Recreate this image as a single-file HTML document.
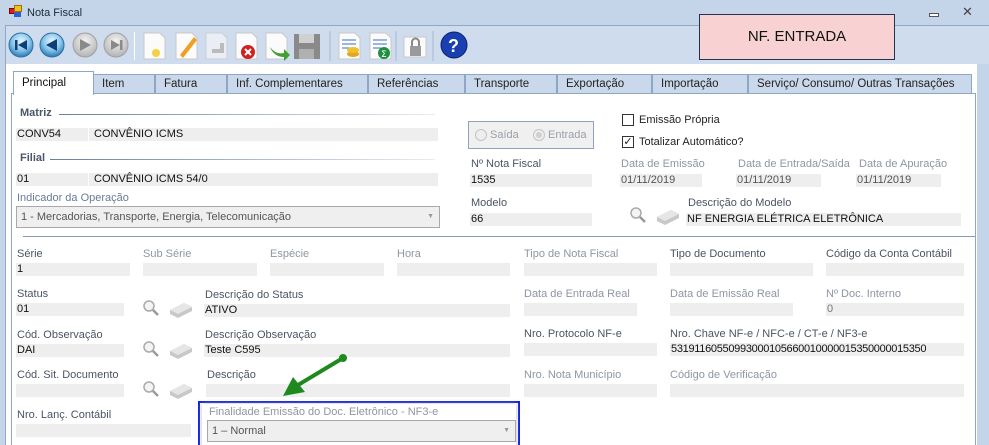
<!DOCTYPE html>
<html style="width:989px;height:445px;overflow:hidden"><head><meta charset="utf-8"><style>
*{margin:0;padding:0;box-sizing:border-box}
body{width:989px;height:445px;overflow:hidden;background:#c4d5ea;font-family:"Liberation Sans",Arial,sans-serif;font-size:11px;color:#1a1a1a;position:relative}
.a{position:absolute;white-space:nowrap}
.f{position:absolute;background:#eeeeee;height:13px;line-height:13px;font-size:11px;padding-left:1px;color:#111}
.l{position:absolute;white-space:nowrap;font-size:11px;color:#4b5463}
.g{color:#8e96a3}
.tab{position:absolute;top:74px;height:20px;border:1px solid #8fa6c4;border-bottom:none;background:#c9d8eb;font-family:"Liberation Sans",Arial,sans-serif;font-size:11.5px;line-height:19px;padding-left:8px;color:#222}
</style></head><body>
<div class="a" style="left:9px;top:8px;width:7px;height:6px;background:#d02020;border:1px solid #800"></div>
<div class="a" style="left:14px;top:5px;width:8px;height:7px;background:#f0c020;border:1px solid #a07000"></div>
<div class="a" style="left:14px;top:12px;width:7px;height:5px;background:#3060d0"></div>
<div class="a" style="left:27px;top:7px;font-size:11px;color:#1e2a3a">Nota Fiscal</div>
<div class="a" style="left:929px;top:13px;width:10px;height:4px;border:1px solid #555;background:#fff"></div>
<div class="a" style="left:962px;top:4px;font-size:13px;color:#444">✕</div>
<div class="a" style="left:5px;top:25px;width:998px;height:41px;background:#cfdcee;border:1px solid #90a7c6;border-bottom:none"></div>
<div class="a" style="left:5px;top:64px;width:998px;height:400px;background:#fff;border-left:1px solid #90a7c6"></div>
<svg class="a" style="left:8px;top:32px" width="124" height="27">
<defs><radialGradient id="b" cx="50%" cy="35%" r="60%"><stop offset="0" stop-color="#e8f6ff"/><stop offset="0.6" stop-color="#8cc8ea"/><stop offset="1" stop-color="#3a86c0"/></radialGradient>
<radialGradient id="gr" cx="50%" cy="35%" r="60%"><stop offset="0" stop-color="#f4f4f4"/><stop offset="1" stop-color="#b8b8b8"/></radialGradient></defs>
<circle cx="13" cy="13" r="12" fill="url(#b)" stroke="#2c6fa6"/><rect x="7" y="8" width="2.5" height="10" fill="#0e3f78"/><path d="M19 8 L10 13 L19 18Z" fill="#0e3f78"/>
<circle cx="44" cy="13" r="12" fill="url(#b)" stroke="#2c6fa6"/><path d="M49 7 L38 13 L49 19Z" fill="#0e3f78"/>
<circle cx="77" cy="13" r="12" fill="url(#gr)" stroke="#a0a0a0"/><path d="M72 7 L83 13 L72 19Z" fill="#8a8a8a"/>
<circle cx="108" cy="13" r="12" fill="url(#gr)" stroke="#a0a0a0"/><path d="M103 8 L112 13 L103 18Z" fill="#8a8a8a"/><rect x="112" y="8" width="2.5" height="10" fill="#8a8a8a"/>
</svg>
<div class="a" style="left:134px;top:32px;width:1px;height:28px;background:#9fb2cc;border-right:1px solid #fff"></div>
<svg class="a" style="left:142px;top:31px" width="330" height="30">
<g fill="#fbfbfb" stroke="#c8c8c8">
<path d="M2 2h16l5 5v21H2z"/><path d="M34 2h16l5 5v21H34z"/><path d="M64 2h16l5 5v21H64z" opacity=".6"/><path d="M94 2h16l5 5v21H94z"/><path d="M124 2h16l5 5v21H124z"/>
<path d="M197 2h16l5 5v21H197z"/><path d="M228 2h16l5 5v21H228z"/><path d="M262 6h22v20H262z"/>
</g>
<circle cx="14" cy="22" r="4" fill="#f6d040"/>
<path d="M38 24 L52 6 L55 9 L41 27Z" fill="#f0a020"/>
<path d="M70 20 h10 v-8" stroke="#bbb" stroke-width="4" fill="none"/>
<circle cx="106" cy="21" r="7" fill="#d02020"/><path d="M103 18l6 6M109 18l-6 6" stroke="#fff" stroke-width="2"/>
<path d="M128 16 q6 8 14 6 l0-4 6 6-6 6 0-4 q-10 0-14-10z" fill="#40a030"/>
<rect x="152" y="3" width="26" height="25" fill="#8a8a8a"/><rect x="157" y="3" width="15" height="9" fill="#d0d0d0"/><rect x="157" y="18" width="15" height="10" fill="#b0b0b0"/>
<path d="M188 0v30M254 0v30M291 0v30" stroke="#a8b8d0"/>
<g stroke="#3a70c0"><path d="M200 9h14M200 13h14M200 17h8M231 9h14M231 13h14M231 17h8"/></g>
<ellipse cx="211" cy="23" rx="6" ry="3" fill="#e0a820"/><ellipse cx="211" cy="19" rx="6" ry="3" fill="#f0c030"/>
<circle cx="242" cy="22" r="6" fill="#209040"/><text x="239" y="26" font-size="9" fill="#fff" font-family="DejaVu Sans">Σ</text>
<rect x="268" y="15" width="11" height="10" fill="#9a9a9a"/><path d="M270 15v-4a3.5 3.5 0 0 1 7 0v4" stroke="#888" stroke-width="2" fill="none"/>
<circle cx="312" cy="14" r="13" fill="#1a3fb0" stroke="#0a2070"/><text x="306" y="21" font-size="18" font-weight="bold" fill="#fff" font-family="Liberation Sans">?</text>
</svg>
<div class="a" style="left:699px;top:14px;width:196px;height:46px;background:#f8d2d2;border:1px solid #24344e;text-align:center;line-height:44px;font-size:15px;color:#111">NF. ENTRADA</div>
<div class="tab" style="left:93px;width:62px">Item</div>
<div class="tab" style="left:155px;width:72px">Fatura</div>
<div class="tab" style="left:227px;width:141px">Inf. Complementares</div>
<div class="tab" style="left:368px;width:97px">Referências</div>
<div class="tab" style="left:465px;width:92px">Transporte</div>
<div class="tab" style="left:557px;width:95px">Exportação</div>
<div class="tab" style="left:652px;width:96px">Importação</div>
<div class="tab" style="left:748px;width:224px">Serviço/ Consumo/ Outras Transações</div>
<div class="a" style="left:11px;top:93px;width:965px;height:380px;border:1px solid #8fa6c4;background:#fff"></div>
<div class="tab" style="left:13px;top:71px;width:81px;height:24px;background:#fff;line-height:22px;color:#111">Principal</div>
<div class="a" style="left:977px;top:64px;width:12px;height:400px;background:#c4d5ea"></div>
<div class="a" style="left:20px;top:107px;font-weight:bold;color:#4b5668">Matriz</div>
<div class="a" style="left:59px;top:114px;width:376px;height:1px;background:linear-gradient(90deg,#6b7f9c,#e8ecf2)"></div>
<div class="f" style="left:16px;top:128px;width:72px">CONV54</div>
<div class="f" style="left:89px;top:128px;width:349px;padding-left:5px">CONVÊNIO ICMS</div>
<div class="a" style="left:20px;top:152px;font-weight:bold;color:#4b5668">Filial</div>
<div class="a" style="left:50px;top:159px;width:385px;height:1px;background:linear-gradient(90deg,#6b7f9c,#e8ecf2)"></div>
<div class="f" style="left:16px;top:173px;width:72px">01</div>
<div class="f" style="left:89px;top:173px;width:349px;padding-left:5px">CONVÊNIO ICMS 54/0</div>
<div class="l" style="left:17px;top:192px;color:#6a7a96">Indicador da Operação</div>
<div class="a" style="left:16px;top:206px;width:424px;height:22px;background:#efefef;border:1px solid #a9a9a9;line-height:20px;padding-left:4px;color:#555">1 - Mercadorias, Transporte, Energia, Telecomunicação<span style="position:absolute;right:5px;font-size:7px;color:#999">▼</span></div>
<div class="a" style="left:23px;top:236px;width:952px;height:1px;background:#8a9bb5"></div>
<div class="a" style="left:468px;top:121px;width:126px;height:28px;border:1px solid #8fa2c0;background:#f0f0f0"></div>
<div class="a" style="left:475px;top:129px;width:12px;height:12px;border-radius:50%;border:1px solid #c4c4c4;background:#eee"></div>
<div class="a" style="left:490px;top:129px;color:#9aa0a8">Saída</div>
<div class="a" style="left:533px;top:129px;width:12px;height:12px;border-radius:50%;border:1px solid #c4c4c4;background:#eee"><div style="margin:2px;width:6px;height:6px;border-radius:50%;background:#d0d0d0"></div></div>
<div class="a" style="left:548px;top:129px;color:#9aa0a8">Entrada</div>
<div class="a" style="left:622px;top:114px;width:12px;height:12px;border:1px solid #333;background:#fff"></div>
<div class="a" style="left:639px;top:114px;color:#222">Emissão Própria</div>
<div class="a" style="left:622px;top:136px;width:12px;height:12px;border:1px solid #333;background:#fff;font-size:11px;line-height:10px;text-align:center">✓</div>
<div class="a" style="left:639px;top:136px;color:#222">Totalizar Automático?</div>
<div class="l" style="left:471px;top:158px">Nº Nota Fiscal</div>
<div class="f" style="left:470px;top:174px;width:122px">1535</div>
<div class="l g" style="left:621px;top:158px">Data de Emissão</div>
<div class="f" style="left:620px;top:174px;width:82px;color:#555">01/11/2019</div>
<div class="l g" style="left:738px;top:158px">Data de Entrada/Saída</div>
<div class="f" style="left:736px;top:174px;width:85px;color:#555">01/11/2019</div>
<div class="l g" style="left:859px;top:158px">Data de Apuração</div>
<div class="f" style="left:856px;top:174px;width:85px;color:#555">01/11/2019</div>
<div class="l" style="left:471px;top:197px">Modelo</div>
<div class="f" style="left:470px;top:213px;width:122px">66</div>
<div class="l" style="left:688px;top:197px">Descrição do Modelo</div>
<div class="f" style="left:686px;top:213px;width:275px">NF ENERGIA ELÉTRICA ELETRÔNICA</div>
<div class="l" style="left:17px;top:248px">Série</div><div class="f" style="left:16px;top:263px;width:114px">1</div>
<div class="l g" style="left:143px;top:248px">Sub Série</div><div class="f" style="left:143px;top:263px;width:114px"></div>
<div class="l g" style="left:270px;top:248px">Espécie</div><div class="f" style="left:270px;top:263px;width:114px"></div>
<div class="l g" style="left:397px;top:248px">Hora</div><div class="f" style="left:397px;top:263px;width:113px"></div>
<div class="l g" style="left:524px;top:248px">Tipo de Nota Fiscal</div><div class="f" style="left:524px;top:263px;width:133px"></div>
<div class="l" style="left:670px;top:248px">Tipo de Documento</div><div class="f" style="left:670px;top:263px;width:143px"></div>
<div class="l" style="left:826px;top:248px">Código da Conta Contábil</div><div class="f" style="left:826px;top:263px;width:138px"></div>
<div class="l" style="left:17px;top:288px">Status</div><div class="f" style="left:16px;top:303px;width:108px">01</div>
<div class="l" style="left:205px;top:289px">Descrição do Status</div><div class="f" style="left:204px;top:304px;width:306px">ATIVO</div>
<div class="l g" style="left:524px;top:288px">Data de Entrada Real</div><div class="f" style="left:524px;top:303px;width:113px"></div>
<div class="l g" style="left:670px;top:288px">Data de Emissão Real</div><div class="f" style="left:670px;top:303px;width:123px"></div>
<div class="l g" style="left:826px;top:288px">Nº Doc. Interno</div><div class="f" style="left:826px;top:303px;width:138px;color:#777">0</div>
<div class="l" style="left:17px;top:329px">Cód. Observação</div><div class="f" style="left:16px;top:344px;width:108px">DAI</div>
<div class="l" style="left:205px;top:329px">Descrição Observação</div><div class="f" style="left:204px;top:344px;width:306px">Teste C595</div>
<div class="l" style="left:524px;top:328px">Nro. Protocolo NF-e</div><div class="f" style="left:524px;top:343px;width:133px"></div>
<div class="l" style="left:670px;top:328px">Nro. Chave NF-e / NFC-e / CT-e / NF3-e</div><div class="f" style="left:670px;top:343px;width:294px;letter-spacing:-0.3px">53191160550993000105660010000015350000015350</div>
<div class="l" style="left:17px;top:369px">Cód. Sit. Documento</div><div class="f" style="left:16px;top:384px;width:108px"></div>
<div class="l" style="left:207px;top:369px">Descrição</div><div class="f" style="left:206px;top:384px;width:304px"></div>
<div class="l g" style="left:524px;top:369px">Nro. Nota Município</div><div class="f" style="left:524px;top:384px;width:133px"></div>
<div class="l g" style="left:670px;top:369px">Código de Verificação</div><div class="f" style="left:670px;top:384px;width:294px"></div>
<div class="l" style="left:17px;top:409px">Nro. Lanç. Contábil</div><div class="f" style="left:16px;top:424px;width:175px"></div>
<div class="a" style="left:198px;top:401px;width:322px;height:60px;border:2px solid #1020e0;background:#fff"></div>
<div class="a" style="left:202px;top:404px;width:314px;height:55px;box-shadow:0 0 4px #bbb"></div>
<div class="l g" style="left:209px;top:406px">Finalidade Emissão do Doc. Eletrônico - NF3-e</div>
<div class="a" style="left:207px;top:420px;width:309px;height:22px;background:#efefef;border:1px solid #a9a9a9;line-height:20px;padding-left:4px;color:#555">1 – Normal<span style="position:absolute;right:5px;font-size:7px;color:#999">▼</span></div>
<svg class="a" style="left:0;top:0" width="989" height="445">
<g id="se">
<circle cx="636" cy="213" r="5" fill="#f4f4f4" stroke="#aaa" stroke-width="1.5"/><path d="M640 217 l5 5" stroke="#999" stroke-width="2.5"/>
<path d="M657 217 l14-7 8 4 0 4 -14 7 -8-4z" fill="#c8c8c8"/><path d="M657 217 l14-7 8 4 -14 7z" fill="#e6e6e6"/>
</g>
<use href="#se" x="-487" y="93"/>
<use href="#se" x="-487" y="134"/>
<use href="#se" x="-487" y="174"/>
<path d="M343 358 L298 385" stroke="#1e8a1e" stroke-width="4"/>
<circle cx="343" cy="358" r="4" fill="#1e8a1e"/>
<path d="M283 396 L293 377 L305 392Z" fill="#1e8a1e"/>
</svg>
</body></html>
